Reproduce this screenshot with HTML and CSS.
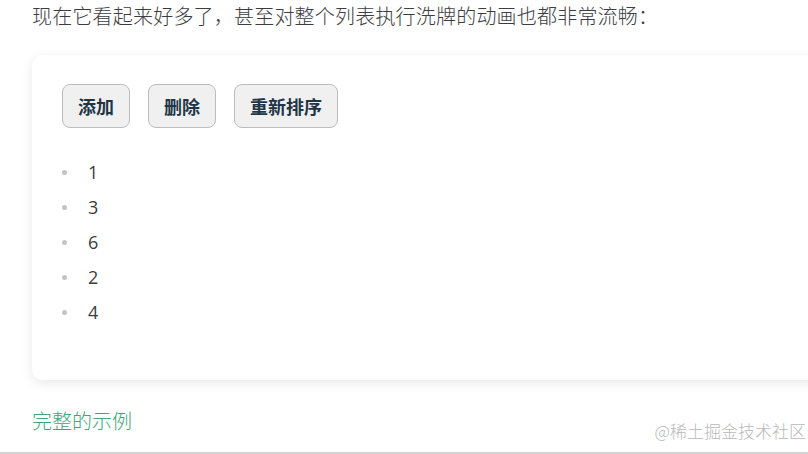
FILE: index.html
```html
<!DOCTYPE html>
<html lang="zh-CN">
<head>
    <meta charset="UTF-8">
    <meta name="viewport" content="width=device-width, initial-scale=1.0">
    <title>列表动画示例</title>
    <link rel="stylesheet" href="styles.css">
</head>
<body>
    <div class="page">
        <p class="intro">现在它看起来好多了，甚至对整个列表执行洗牌的动画也都非常流畅：</p>

        <!-- Demo -->
        <div class="demo">
            <div class="actions">
                <button class="btn">添加</button>
                <button class="btn">删除</button>
                <button class="btn">重新排序</button>
            </div>
            <ul class="items">
                <li>1</li>
                <li>3</li>
                <li>6</li>
                <li>2</li>
                <li>4</li>
            </ul>
        </div>

        <a class="example-link" href="#">完整的示例</a>

        <span class="watermark">@稀土掘金技术社区</span>
    </div>
</body>
</html>
```

FILE: styles.css
```css
/* General Styling */
* {
    margin: 0;
    padding: 0;
    box-sizing: border-box;
}

body {
    font-family: Inter, "Noto Sans CJK SC", sans-serif;
    background-color: #fff;
    color: #3c3c43;
    overflow: hidden;
}

.page {
    position: relative;
    height: 100vh;
    padding-left: 32px;
    border-bottom: 2px solid #d2d2d2;
}

.intro {
    font-size: 20px;
    font-weight: 300;
    letter-spacing: 0.2px;
    line-height: 34px;
    color: #3c3c43;
}

/* Demo card */
.demo {
    width: calc(100% + 40px);
    margin-top: 21px;
    height: 325px;
    padding: 29px 30px 0;
    background-color: #fff;
    border-radius: 10px;
    box-shadow: 0 3px 12px rgba(0, 0, 0, 0.09);
}

.actions {
    display: flex;
    gap: 18px;
}

.btn {
    height: 44px;
    padding: 0 15px;
    font-family: "Noto Sans CJK SC", sans-serif;
    font-size: 18px;
    font-weight: 700;
    color: #213547;
    background-color: #f0f0f0;
    border: 1px solid #bcbcbc;
    border-radius: 8px;
    cursor: pointer;
}

.items {
    list-style: none;
    margin-top: 27px;
}

.items li {
    display: flex;
    align-items: center;
    gap: 21px;
    font-family: "Open Sans", sans-serif;
    font-size: 18px;
    line-height: 35px;
    color: #3c3c43;
}

.items li::before {
    content: "";
    width: 5px;
    height: 5px;
    border-radius: 50%;
    background-color: #c4c4c4;
}

/* Link */
.example-link {
    display: inline-block;
    margin-top: 27px;
    font-size: 20px;
    font-weight: 300;
    line-height: 30px;
    color: #3fa57a;
    text-decoration: none;
}

.watermark {
    position: absolute;
    right: 2px;
    bottom: 11px;
    font-family: "Noto Sans CJK SC", sans-serif;
    font-size: 17px;
    font-weight: 300;
    line-height: 20px;
    color: #b9b9b9;
}
```
